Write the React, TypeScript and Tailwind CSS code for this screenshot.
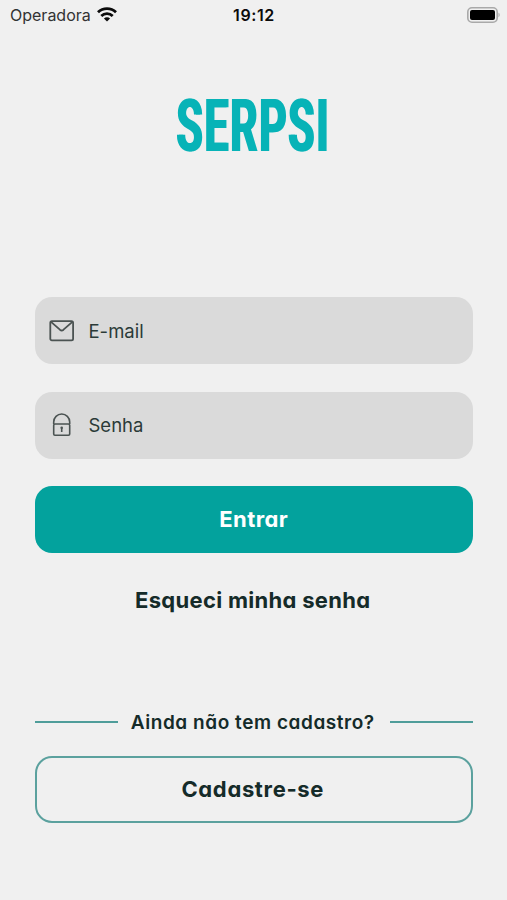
import type { ReactNode } from 'react';

interface FieldProps {
  icon: ReactNode;
  label: string;
  type: string;
}

function WifiIcon() {
  return (
    <svg width="20" height="15" viewBox="0 0 20 15" fill="none" stroke="#0b0b0b" strokeWidth="2.8">
      <path d="M1 5.3a13 13 0 0 1 18 0" />
      <path d="M4.3 8.9a8.2 8.2 0 0 1 11.4 0" />
      <path d="M10 14.6 6.9 11.5a4.4 4.4 0 0 1 6.2 0Z" fill="#0b0b0b" stroke="none" />
    </svg>
  );
}

function BatteryIcon() {
  return (
    <svg width="34" height="16" viewBox="0 0 34 16">
      <rect x="0.8" y="0.8" width="29.4" height="14.4" rx="4.2" fill="none" stroke="#a9a9a9" strokeWidth="1.6" />
      <rect x="3" y="3" width="25" height="10" rx="2" fill="#000" />
      <path d="M31.5 5.8c1.5.5 1.5 3.9 0 4.4Z" fill="#a9a9a9" />
    </svg>
  );
}

function MailIcon() {
  return (
    <svg width="26" height="22" viewBox="0 0 26 22" fill="none" stroke="#4b5352" strokeWidth="1.8" strokeLinejoin="round">
      <rect x="1.3" y="1.2" width="22.8" height="19.2" rx="1.6" />
      <path d="M2 1.8l8.9 7.9q1.8 1.5 3.6 0L23.4 1.8" />
    </svg>
  );
}

function LockIcon() {
  return (
    <svg width="26" height="24" viewBox="0 0 26 24" fill="none" stroke="#4b5352" strokeWidth="1.6" strokeLinejoin="round">
      <path d="M4.7 11V9a8 8 0 0 1 16 0v2" />
      <rect x="4.7" y="11" width="16" height="11.2" rx="1.2" />
      <path d="M12.7 15v4" />
      <circle cx="12.7" cy="14.8" r="1.3" fill="#4b5352" stroke="none" />
    </svg>
  );
}

function Field({ icon, label, type }: FieldProps) {
  return (
    <label className="flex h-[67px] items-center gap-[14px] rounded-[17px] bg-[#dadada] pl-[14px]">
      {icon}
      <input
        type={type}
        placeholder={label}
        className="min-w-0 flex-1 bg-transparent pt-px font-['Inter',sans-serif] text-[18.5px] text-[#2b3a38] outline-none placeholder:text-[#2b3a38]"
      />
    </label>
  );
}

export default function App() {
  return (
    <div className="flex h-[900px] w-[507px] flex-col overflow-hidden bg-[#f0f0f0] font-['Inter',sans-serif] text-[#152b29]">
      <header className="grid h-[29px] grid-cols-3 items-center pr-[6px] pl-[7px]">
        <div className="flex items-center gap-[6px] pl-[3px]">
          <span className="text-[16px] text-[#333]">Operadora</span>
          <WifiIcon />
        </div>
        <span className="text-center text-[16px] font-semibold tracking-[0.6px] text-[#0b0b0b]">19:12</span>
        <div className="flex justify-end">
          <BatteryIcon />
        </div>
      </header>

      <main className="flex flex-1 flex-col pr-[34px] pl-[34.5px]">
        <h1 className="mt-[49px] flex justify-center">
          <svg width="180" height="100" viewBox="0 0 180 100" aria-label="SERPSI" className="overflow-visible drop-shadow-[2.8px_0_0_#07b3b7]">
            <text
              x="11.5"
              y="72.5"
              textLength="154"
              lengthAdjust="spacingAndGlyphs"
              fill="#07b3b7"
              className="font-['Roboto',sans-serif] text-[73px] font-bold tracking-[3px]"
            >
              SERPSI
            </text>
          </svg>
        </h1>

        <form className="mt-[119.4px] flex flex-col gap-[27.3px]">
          <Field icon={<MailIcon />} label="E-mail" type="email" />
          <Field icon={<LockIcon />} label="Senha" type="password" />
          <button type="button" className="h-[67.5px] rounded-[17px] bg-[#03a29d] text-[22px] font-bold tracking-[0.4px] text-white [font-feature-settings:'cv11']">
            Entrar
          </button>
        </form>

        <a className="mt-[31px] pr-[2px] text-center text-[22px] leading-[32px] font-bold tracking-[0.3px] [font-feature-settings:'cv11']">
          Esqueci minha senha
        </a>

        <div className="mt-[91px] flex h-[29px] items-center">
          <span className="h-[2px] w-[83.5px] bg-[#4f9d9a]" />
          <span className="flex-1 pt-[2px] pr-[2px] text-center text-[19px] font-semibold tracking-[0.55px] whitespace-nowrap [font-feature-settings:'cv11']">
            Ainda não tem cadastro?
          </span>
          <span className="h-[2px] w-[83.5px] bg-[#4f9d9a]" />
        </div>

        <button className="mt-[19.5px] h-[67.5px] rounded-[17px] border-2 border-[#5ba19e] pr-[2px] text-[22px] font-bold tracking-[0.65px] [font-feature-settings:'cv11']">
          Cadastre-se
        </button>
      </main>
    </div>
  );
}
